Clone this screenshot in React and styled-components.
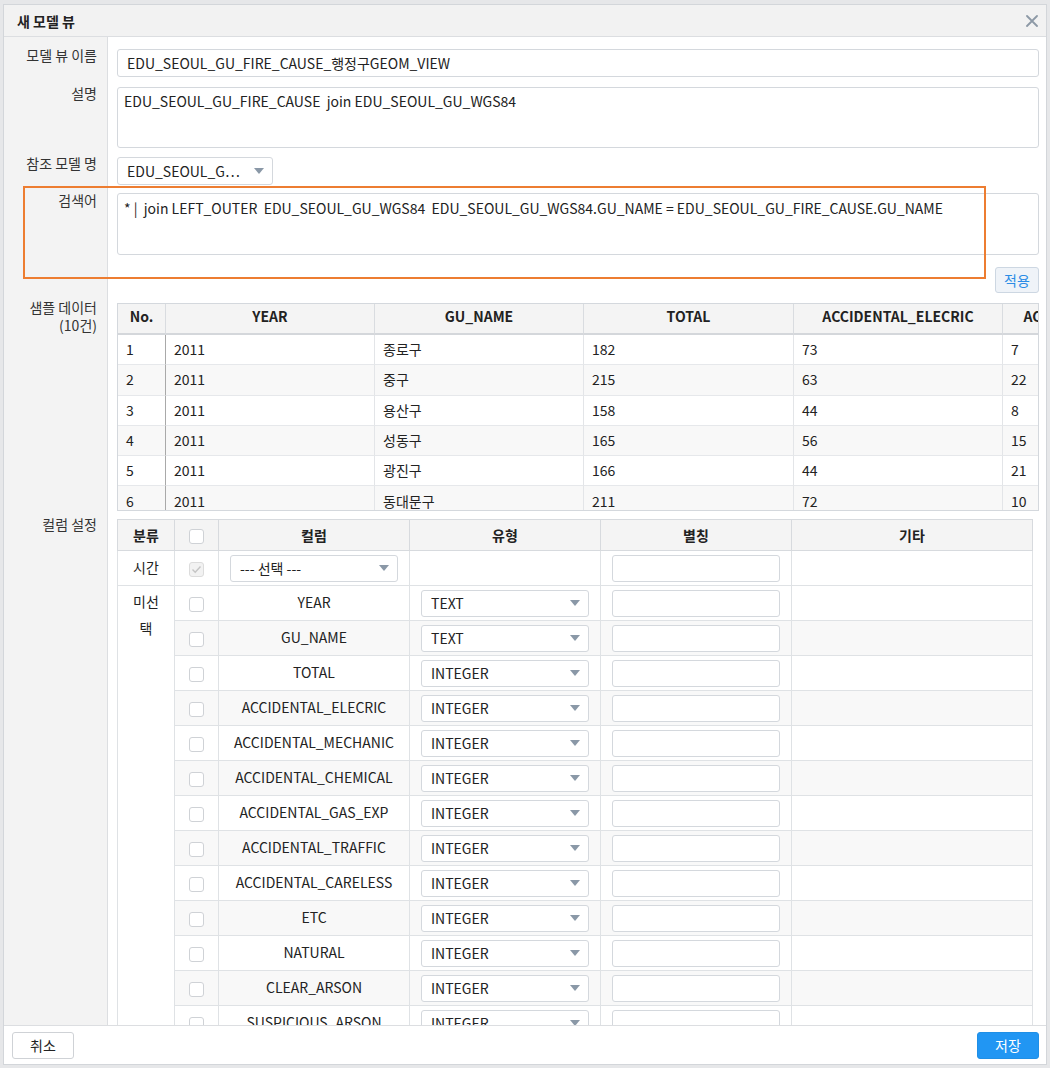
import React from 'react';
import styled, { createGlobalStyle } from 'styled-components';

const GlobalStyle = createGlobalStyle`
  * { box-sizing: border-box; }
  html, body { margin: 0; padding: 0; }
  body {
    background: #e6e7e9;
    font-family: "Noto Sans CJK KR", "Noto Sans", sans-serif;
    font-size: 14px;
    color: #222;
  }
`;

const Page = styled.div`
  padding: 4px 3px 3px 3px;
`;

const Dialog = styled.div`
  width: 1044px;
  height: 1061px;
  background: #fff;
  border: 1px solid #d3d6da;
  display: flex;
  flex-direction: column;
`;

const Header = styled.div`
  height: 32px;
  flex: none;
  background: #f2f2f2;
  border-bottom: 1px solid #dcdee1;
  display: flex;
  align-items: center;
  justify-content: space-between;
  padding: 0 7px 0 13px;
`;

const Title = styled.div`
  font-weight: 700;
  font-size: 14px;
  color: #222;
`;

const CloseButton = styled.button`
  border: 0;
  background: transparent;
  padding: 0;
  width: 14px;
  height: 14px;
  display: flex;
  align-items: center;
  justify-content: center;
  cursor: pointer;
`;

const Body = styled.div`
  flex: 1;
  overflow: hidden;
  display: flex;
  flex-direction: column;
`;

const FormRow = styled.div`
  position: relative;
  display: grid;
  grid-template-columns: 104px 1fr;
  flex: ${(p) => (p.$grow ? '1' : 'none')};
`;

const Label = styled.div`
  background: #f3f3f3;
  border-right: 1px solid #dcdee1;
  text-align: right;
  padding: ${(p) => p.$pt}px 10px 0 0;
  line-height: 18px;
  color: #333;
  font-size: 14px;
`;

const Field = styled.div`
  padding: ${(p) => p.$pt}px 7px ${(p) => p.$pb}px 9px;
  display: flex;
  flex-direction: column;
  min-width: 0;
`;

const TextBox = styled.div`
  height: 28px;
  border: 1px solid #d4d8dd;
  border-radius: 3px;
  padding: 0 9px;
  display: flex;
  align-items: center;
  white-space: nowrap;
  overflow: hidden;
  color: #222;
`;

const TextArea = styled.div`
  height: ${(p) => p.$h}px;
  border: 1px solid #d4d8dd;
  border-radius: 3px;
  padding: ${(p) => p.$pt}px 6px 0 6px;
  line-height: 20px;
  white-space: pre;
  overflow: hidden;
  color: #222;
`;

const SelectBox = styled.div`
  width: ${(p) => (p.$w ? `${p.$w}px` : '100%')};
  height: ${(p) => p.$h || 27}px;
  border: 1px solid #d4d8dd;
  border-radius: 3px;
  padding: 0 8px 0 9px;
  display: flex;
  align-items: center;
  justify-content: space-between;
  background: #fff;
  white-space: nowrap;
  color: #222;
`;

const Caret = () => (
  <svg width="10" height="6" viewBox="0 0 10 6">
    <path d="M0 0 L10 0 L5 6 Z" fill="#8a98a7" />
  </svg>
);

const Annotation = styled.div`
  position: absolute;
  left: 19px;
  top: -3px;
  width: 963px;
  height: 93px;
  border: 2px solid #ed7d31;
  pointer-events: none;
`;

const ApplyRow = styled.div`
  display: flex;
  justify-content: flex-end;
  margin-top: 12px;
`;

const ApplyButton = styled.button`
  width: 44px;
  height: 26px;
  border: 1px solid #cdd7e2;
  border-radius: 3px;
  background: #eff3f8;
  color: #2b8ce6;
  font-family: inherit;
  font-size: 14px;
  padding: 0;
`;

const SampleWrap = styled.div`
  height: 208px;
  border: 1px solid #d4d8dd;
  overflow: hidden;
`;

const SampleTable = styled.table`
  border-collapse: separate;
  border-spacing: 0;
  table-layout: fixed;
  width: 1300px;
`;

const SampleTh = styled.th`
  height: 31px;
  background: #f4f4f4;
  font-weight: 700;
  font-size: 14px;
  color: #222;
  text-align: center;
  padding: 0 8px 6px;
  border-right: 1px solid #d9dce0;
  border-bottom: 2px solid #d4d7db;
  white-space: nowrap;
  overflow: hidden;
`;

const SampleTd = styled.td`
  height: 30.3px;
  padding: 0 8px 1px;
  border-right: 1px solid ${(p) => (p.$strong ? '#a9a9a9' : '#e3e5e8')};
  border-bottom: 1px solid #e6e8eb;
  white-space: nowrap;
  overflow: hidden;
  color: #222;
`;

const SampleTr = styled.tr`
  background: ${(p) => (p.$alt ? '#f8f8f8' : '#fff')};
`;

const ConfigTable = styled.table`
  width: 916px;
  border-collapse: collapse;
  table-layout: fixed;
  border: 1px solid #d7dade;
`;

const ConfigTh = styled.th`
  height: 31px;
  background: #f4f4f4;
  font-weight: 700;
  font-size: 14px;
  color: #222;
  text-align: center;
  border: 1px solid #d7dade;
  padding: 0 0 1px;
`;

const ConfigTr = styled.tr`
  background: ${(p) => (p.$alt ? '#f8f8f8' : '#fff')};
`;

const ConfigTd = styled.td`
  height: 35px;
  border: 1px solid #dfe2e5;
  padding: ${(p) => (p.$ctrl ? '0 11px 0 11px' : '0 0 2px')};
  text-align: ${(p) => (p.$left ? 'left' : 'center')};
  vertical-align: middle;
  color: #222;
  white-space: nowrap;
`;

const GroupTd = styled.td`
  background: #fff;
  border: 1px solid #dfe2e5;
  vertical-align: top;
  text-align: center;
  padding: 2px 13px 0;
  line-height: 27px;
  color: #222;
  word-break: break-all;
`;

const Check = styled.span`
  display: inline-flex;
  width: 15px;
  height: 15px;
  border: 1px solid ${(p) => (p.$disabled ? '#dcdcdc' : '#cfd2d6')};
  border-radius: 3px;
  background: ${(p) => (p.$disabled ? '#f2f2f2' : '#fff')};
  align-items: center;
  justify-content: center;
  vertical-align: middle;
`;

const AliasInput = styled.div`
  height: 27px;
  border: 1px solid #d4d8dd;
  border-radius: 3px;
  background: #fff;
`;

const Footer = styled.div`
  height: 39px;
  flex: none;
  border-top: 1px solid #dcdee1;
  display: flex;
  align-items: center;
  justify-content: space-between;
  padding: 0 7px 0 8px;
`;

const FooterButton = styled.button`
  width: 62px;
  height: 27px;
  border-radius: 3px;
  font-family: inherit;
  font-size: 14px;
  padding: 0;
  border: 1px solid ${(p) => (p.$primary ? '#1f8fe6' : '#cfd2d6')};
  background: ${(p) => (p.$primary ? '#2196f3' : '#fff')};
  color: ${(p) => (p.$primary ? '#fff' : '#222')};
`;

const sampleCols = [
  { key: 'no', title: 'No.', w: 48 },
  { key: 'year', title: 'YEAR', w: 209 },
  { key: 'gu', title: 'GU_NAME', w: 209 },
  { key: 'total', title: 'TOTAL', w: 210 },
  { key: 'elec', title: 'ACCIDENTAL_ELECRIC', w: 209 },
  { key: 'mech', title: 'ACCIDENTAL_MECHANIC', w: 209 },
  { key: 'chem', title: 'ACCIDENTAL_CHEMICAL', w: 206 },
];

const sampleRows = [
  ['1', '2011', '종로구', '182', '73', '7', '1'],
  ['2', '2011', '중구', '215', '63', '22', '2'],
  ['3', '2011', '용산구', '158', '44', '8', '0'],
  ['4', '2011', '성동구', '165', '56', '15', '1'],
  ['5', '2011', '광진구', '166', '44', '21', '0'],
  ['6', '2011', '동대문구', '211', '72', '10', '2'],
  ['7', '2011', '중랑구', '190', '61', '12', '1'],
];

const columns = [
  ['YEAR', 'TEXT'],
  ['GU_NAME', 'TEXT'],
  ['TOTAL', 'INTEGER'],
  ['ACCIDENTAL_ELECRIC', 'INTEGER'],
  ['ACCIDENTAL_MECHANIC', 'INTEGER'],
  ['ACCIDENTAL_CHEMICAL', 'INTEGER'],
  ['ACCIDENTAL_GAS_EXP', 'INTEGER'],
  ['ACCIDENTAL_TRAFFIC', 'INTEGER'],
  ['ACCIDENTAL_CARELESS', 'INTEGER'],
  ['ETC', 'INTEGER'],
  ['NATURAL', 'INTEGER'],
  ['CLEAR_ARSON', 'INTEGER'],
  ['SUSPICIOUS_ARSON', 'INTEGER'],
  ['UNKNOWN', 'INTEGER'],
];

export default function App() {
  return (
    <>
      <GlobalStyle />
      <Page>
        <Dialog>
          <Header>
            <Title>새 모델 뷰</Title>
            <CloseButton aria-label="close">
              <svg width="12" height="12" viewBox="0 0 12 12">
                <path d="M1 1 L11 11 M11 1 L1 11" stroke="#8d99a6" strokeWidth="1.8" strokeLinecap="round" />
              </svg>
            </CloseButton>
          </Header>
          <Body>
            <FormRow>
              <Label $pt={9}>모델 뷰 이름</Label>
              <Field $pt={12} $pb={5}>
                <TextBox>EDU_SEOUL_GU_FIRE_CAUSE_행정구GEOM_VIEW</TextBox>
              </Field>
            </FormRow>
            <FormRow>
              <Label $pt={2}>설명</Label>
              <Field $pt={5} $pb={4}>
                <TextArea $h={61} $pt={3}>EDU_SEOUL_GU_FIRE_CAUSE  join EDU_SEOUL_GU_WGS84</TextArea>
              </Field>
            </FormRow>
            <FormRow>
              <Label $pt={2}>참조 모델 명</Label>
              <Field $pt={5} $pb={4}>
                <SelectBox $w={156} $h={28}>
                  <span>EDU_SEOUL_G⋯</span>
                  <Caret />
                </SelectBox>
              </Field>
            </FormRow>
            <FormRow>
              <Annotation />
              <Label $pt={2}>검색어</Label>
              <Field $pt={4} $pb={5}>
                <TextArea $h={62} $pt={4}>* |  join LEFT_OUTER  EDU_SEOUL_GU_WGS84  EDU_SEOUL_GU_WGS84.GU_NAME = EDU_SEOUL_GU_FIRE_CAUSE.GU_NAME</TextArea>
                <ApplyRow>
                  <ApplyButton>적용</ApplyButton>
                </ApplyRow>
              </Field>
            </FormRow>
            <FormRow>
              <Label $pt={0}>
                샘플 데이터
                <br />
                (10건)
              </Label>
              <Field $pt={5} $pb={4}>
                <SampleWrap>
                  <SampleTable>
                    <colgroup>
                      {sampleCols.map((c) => (
                        <col key={c.key} style={{ width: c.w }} />
                      ))}
                    </colgroup>
                    <thead>
                      <tr>
                        {sampleCols.map((c) => (
                          <SampleTh key={c.key}>{c.title}</SampleTh>
                        ))}
                      </tr>
                    </thead>
                    <tbody>
                      {sampleRows.map((r, i) => (
                        <SampleTr key={r[0]} $alt={i % 2 === 1}>
                          {r.map((v, j) => (
                            <SampleTd key={j} $strong={j === 0}>
                              {v}
                            </SampleTd>
                          ))}
                        </SampleTr>
                      ))}
                    </tbody>
                  </SampleTable>
                </SampleWrap>
              </Field>
            </FormRow>
            <FormRow $grow>
              <Label $pt={0}>컬럼 설정</Label>
              <Field $pt={4} $pb={0}>
                <ConfigTable>
                  <colgroup>
                    <col style={{ width: 57 }} />
                    <col style={{ width: 44 }} />
                    <col style={{ width: 191 }} />
                    <col style={{ width: 191 }} />
                    <col style={{ width: 191 }} />
                    <col />
                  </colgroup>
                  <thead>
                    <tr>
                      <ConfigTh>분류</ConfigTh>
                      <ConfigTh>
                        <Check />
                      </ConfigTh>
                      <ConfigTh>컬럼</ConfigTh>
                      <ConfigTh>유형</ConfigTh>
                      <ConfigTh>별칭</ConfigTh>
                      <ConfigTh>기타</ConfigTh>
                    </tr>
                  </thead>
                  <tbody>
                    <ConfigTr>
                      <ConfigTd>시간</ConfigTd>
                      <ConfigTd>
                        <Check $disabled>
                          <svg width="11" height="9" viewBox="0 0 11 9">
                            <path d="M1.5 4.5 L4.2 7.2 L9.5 1.5" fill="none" stroke="#c4c4c4" strokeWidth="1.4" />
                          </svg>
                        </Check>
                      </ConfigTd>
                      <ConfigTd $ctrl $left>
                        <SelectBox>
                          <span>--- 선택 ---</span>
                          <Caret />
                        </SelectBox>
                      </ConfigTd>
                      <ConfigTd />
                      <ConfigTd $ctrl>
                        <AliasInput />
                      </ConfigTd>
                      <ConfigTd />
                    </ConfigTr>
                    {columns.map(([name, type], i) => (
                      <ConfigTr key={name} $alt={i % 2 === 1}>
                        {i === 0 && <GroupTd rowSpan={columns.length}>미선택</GroupTd>}
                        <ConfigTd>
                          <Check />
                        </ConfigTd>
                        <ConfigTd>{name}</ConfigTd>
                        <ConfigTd $ctrl $left>
                          <SelectBox>
                            <span>{type}</span>
                            <Caret />
                          </SelectBox>
                        </ConfigTd>
                        <ConfigTd $ctrl>
                          <AliasInput />
                        </ConfigTd>
                        <ConfigTd />
                      </ConfigTr>
                    ))}
                  </tbody>
                </ConfigTable>
              </Field>
            </FormRow>
          </Body>
          <Footer>
            <FooterButton>취소</FooterButton>
            <FooterButton $primary>저장</FooterButton>
          </Footer>
        </Dialog>
      </Page>
    </>
  );
}
